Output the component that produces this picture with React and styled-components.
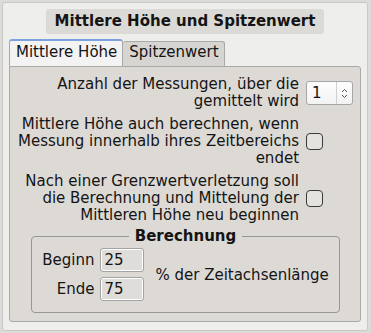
import styled, { createGlobalStyle } from "styled-components";

const GlobalStyle = createGlobalStyle`
  html, body {
    margin: 0;
    padding: 0;
    background: #dcdbd9;
  }
  body {
    font-family: "DejaVu Sans", "Liberation Sans", sans-serif;
    font-size: 15px;
    color: #141414;
  }
  * { box-sizing: border-box; }
`;

const Frame = styled.div`
  margin: 2px;
  width: 366px;
  height: 329px;
  border: 1px solid #cac8c5;
  border-radius: 3px;
  background: #eeeeed;
  padding: 6px;
  display: flex;
  flex-direction: column;
`;

const TitleRow = styled.div`
  display: flex;
  justify-content: center;
`;

const Title = styled.div`
  height: 25px;
  line-height: 25px;
  padding: 0 9px;
  background: #dcdad6;
  border-radius: 3px;
  font-weight: bold;
  white-space: nowrap;
`;

const TabBar = styled.div`
  display: flex;
  align-items: flex-end;
  margin-top: 5px;
`;

const Tab = styled.div`
  line-height: 17px;
  padding: ${p => (p.$active ? "3px 5px 5px 6px" : "2px 5px 5px 6px")};
  border: 1px solid #a9a9a9;
  border-bottom: none;
  border-top: ${p => (p.$active ? "2px solid #7aa3e0" : "1px solid #a9a9a9")};
  border-left: ${p => (p.$active ? "1px solid #a9a9a9" : "none")};
  border-radius: 3px 3px 0 0;
  background: ${p => (p.$active ? "#f3f3f3" : "#d7d5d1")};
  white-space: nowrap;
`;

const Pane = styled.div`
  flex: 1;
  border: 1px solid #a9a9a9;
  border-radius: 0 3px 3px 3px;
  background: #dddad6;
  padding: 9px 8px 8px 8px;
  margin-bottom: 2px;
`;

const Options = styled.div`
  display: grid;
  grid-template-columns: 1fr 47px;
  column-gap: 7px;
  row-gap: 6px;
  align-items: center;
`;

const Label = styled.div`
  text-align: right;
  line-height: 17px;
  white-space: nowrap;
`;

const Spin = styled.div`
  width: 47px;
  height: 24px;
  border: 1px solid #a6a6a6;
  border-radius: 3px;
  background: linear-gradient(#fdfdfd, #f3f3f3);
  display: flex;
  align-items: center;
`;

const SpinValue = styled.span`
  flex: 1;
  padding-left: 5px;
`;

const SpinArrows = styled.span`
  width: 16px;
  height: 22px;
  border-left: 1px solid #cfcfcf;
  display: flex;
  align-items: center;
  justify-content: center;
`;

const Check = styled.div`
  width: 17px;
  height: 17px;
  border: 1.5px solid #3a3a3a;
  border-radius: 4px;
  background: #e5e3e0;
`;

const Group = styled.fieldset`
  margin: 4px 12px 0 13px;
  border: 1px solid #979797;
  border-radius: 4px;
  padding: 3px 10px 11px 10px;
`;

const Legend = styled.legend`
  margin: 0 auto;
  padding: 0 6px;
  font-weight: bold;
  line-height: 17px;
`;

const Fields = styled.div`
  display: grid;
  grid-template-columns: auto 44px auto;
  column-gap: 6px;
  row-gap: 5px;
  align-items: center;
`;

const FieldLabel = styled.div`
  text-align: right;
`;

const Entry = styled.div`
  height: 24px;
  border: 1px solid #a3a3a3;
  border-radius: 3px;
  box-shadow: inset 0 0 0 1px #ffffff;
  background: #dfddda;
  padding-left: 3px;
  line-height: 22px;
`;

const Suffix = styled.div`
  grid-column: 3;
  grid-row: 1 / span 2;
  margin-left: 5px;
  white-space: nowrap;
`;

function SpinIcon() {
  return (
    <svg width="7" height="11" viewBox="0 0 7 11">
      <path d="M1 4 L3.5 1.5 L6 4 M1 7 L3.5 9.5 L6 7" fill="none" stroke="#555" strokeWidth="1" />
    </svg>
  );
}

export default function App() {
  return (
    <>
      <GlobalStyle />
      <Frame>
        <TitleRow>
          <Title>Mittlere Höhe und Spitzenwert</Title>
        </TitleRow>
        <TabBar>
          <Tab $active>Mittlere Höhe</Tab>
          <Tab>Spitzenwert</Tab>
        </TabBar>
        <Pane>
          <Options>
            <Label>Anzahl der Messungen, über die<br />gemittelt wird</Label>
            <Spin>
              <SpinValue>1</SpinValue>
              <SpinArrows><SpinIcon /></SpinArrows>
            </Spin>

            <Label>Mittlere Höhe auch berechnen, wenn<br />Messung innerhalb ihres Zeitbereichs<br />endet</Label>
            <Check />

            <Label>Nach einer Grenzwertverletzung soll<br />die Berechnung und Mittelung der<br />Mittleren Höhe neu beginnen</Label>
            <Check />
          </Options>

          <Group>
            <Legend>Berechnung</Legend>
            <Fields>
              <FieldLabel>Beginn</FieldLabel>
              <Entry>25</Entry>
              <Suffix>% der Zeitachsenlänge</Suffix>
              <FieldLabel>Ende</FieldLabel>
              <Entry>75</Entry>
            </Fields>
          </Group>
        </Pane>
      </Frame>
    </>
  );
}
